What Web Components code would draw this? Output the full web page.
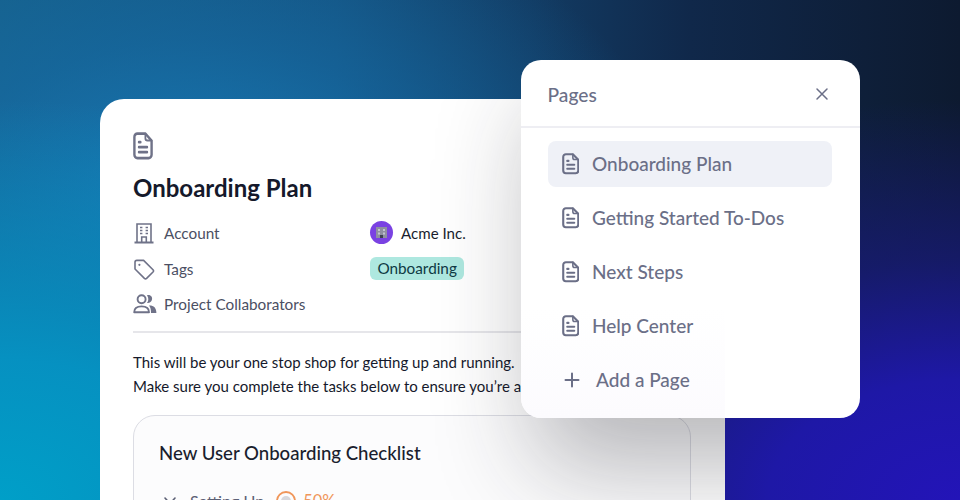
<!DOCTYPE html>
<html><head><meta charset="utf-8">
<style>
html,body{margin:0;padding:0;width:960px;height:500px;overflow:hidden}
body{font-family:Lato,"Open Sans",sans-serif}
</style></head><body>
<onboarding-scene>
  <doc-card>
    <meta-row label="Account" icon="building"><company-chip>Acme Inc.</company-chip></meta-row>
    <meta-row label="Tags" icon="tag"><tag-pill>Onboarding</tag-pill></meta-row>
    <meta-row label="Project Collaborators" icon="users"></meta-row>
  </doc-card>
  <pages-panel>
    <page-item active>Onboarding Plan</page-item>
    <page-item>Getting Started To-Dos</page-item>
    <page-item>Next Steps</page-item>
    <page-item>Help Center</page-item>
    <page-item add>Add a Page</page-item>
  </pages-panel>
</onboarding-scene>
<script>
const DOC=(w,h)=>`<svg width="${w}" height="${h}" viewBox="0 0 20 24.4" preserveAspectRatio="none" fill="none" stroke="currentColor" stroke-width="2.4" stroke-linecap="round" stroke-linejoin="round"><path d="M12.4 1.4H4.4A3 3 0 0 0 1.4 4.4V20A3 3 0 0 0 4.4 23H15.6A3 3 0 0 0 18.6 20V7.6Z"/><path d="M12.4 1.6V5.4A2 2 0 0 0 14.4 7.4H18.4" stroke-width="1.8"/><path d="M6 9H7.4M6 13.4H14M6 17.8H14"/></svg>`;
const ICONS={
building:`<svg width="22" height="22" viewBox="0 0 22 22" fill="none" stroke="currentColor" stroke-width="1.6"><path d="M4 20.5V2H18V20.5"/><path d="M1.5 20.5H20.5" stroke-width="1.8"/><path d="M8.7 20.5V15H13.3V20.5"/><path d="M7 5.5H9.4M12.6 5.5H15M7 8.5H9.4M12.6 8.5H15M7 11.5H9.4M12.6 11.5H15" stroke-width="1.7"/></svg>`,
tag:`<svg width="22" height="22" viewBox="0 0 22 22" fill="none" stroke="currentColor" stroke-width="1.6" stroke-linejoin="round"><path d="M2 4.2A1.8 1.8 0 0 1 3.8 2.4H10.6L20 11.8A1.6 1.6 0 0 1 20 14L13.6 20.4A1.6 1.6 0 0 1 11.4 20.4L2 11Z"/><circle cx="6.4" cy="6.8" r="1.1" fill="currentColor" stroke="none"/></svg>`,
users:`<svg width="24" height="22" viewBox="0 0 24 22" fill="none"><circle cx="8.6" cy="6.2" r="4" stroke="currentColor" stroke-width="1.9"/><path d="M1.2 19.2C1.2 15.4 3.6 13.4 8.6 13.4S16 15.4 16 19.2Z" stroke="currentColor" stroke-width="1.9" stroke-linejoin="round"/><path d="M14 2.2C18 1.4 19.6 4.2 19 6.6 18.5 9 16.4 10.4 14 10 15.8 7.6 15.8 4.8 14 2.2Z" fill="currentColor"/><path d="M16 12.4C20.6 12.2 23.4 14.6 23.4 20H18C18 16.6 17.6 14.4 16 12.4Z" fill="currentColor"/></svg>`};

class OnboardingScene extends HTMLElement{constructor(){super();this.attachShadow({mode:'open'}).innerHTML=`<style>
:host{display:block;position:relative;width:960px;height:500px;overflow:hidden;
background:
 radial-gradient(640px 400px at 100% 100%,#2314b8 0%,#1e18a6 30%,rgba(24,26,120,.75) 60%,rgba(16,28,70,0) 100%),
 radial-gradient(620px 400px at 0% 100%,#009fc8 0%,rgba(4,150,198,.9) 35%,rgba(10,120,180,0) 100%),
 radial-gradient(480px 300px at 20% 38%,rgba(24,122,182,.95) 0%,rgba(22,110,170,.55) 50%,rgba(20,90,140,0) 100%),
 linear-gradient(90deg,#165f88 0%,#14507c 35%,#123c64 55%,#10284a 72%,#0d1a30 100%);}
</style><slot></slot>`}}
class DocCard extends HTMLElement{constructor(){super();this.attachShadow({mode:'open'}).innerHTML=`<style>
:host{display:block;position:absolute;left:100px;top:99px;width:625px;height:460px;background:#fff;border-radius:24px 24px 0 0;overflow:hidden;box-sizing:border-box;padding:33px 34px 0 33px;color:#15192b}
.shade{position:absolute;left:421px;top:-39px;width:338px;height:358px;border-radius:20px;box-shadow:14px 48px 100px rgba(30,30,40,.32)}
.ic{color:#6f7288;height:28px;display:block}
.ic svg{display:block}
h1{margin:13px 0 0;font:700 24px/30px Lato,sans-serif;color:#15192b}
.rows{margin-top:12px;display:flex;flex-direction:column}
hr{border:0;height:2px;background:#e6e6ea;margin:9px 0 0}
p{margin:17px 0 0;font:400 15px/24px Lato,sans-serif;color:#15192b;white-space:nowrap}
.box{margin-top:17px;border:1px solid #dcdde4;border-radius:22px;height:150px;padding:24px 25px;background:#fcfcfd;box-sizing:border-box;width:558px}
h2{margin:0;font:500 18.6px/26px Lato,sans-serif;color:#1a1e2e}
.prog{display:flex;align-items:flex-start;margin-top:23px;font:400 16.1px/24px Lato,sans-serif;color:#5c6075;margin-left:4px}
.name{margin:0 12px 0 13px}
.pct{color:#f0965a;font-size:16.5px;margin-left:7px}
.prog svg{display:block;flex:none}
.chev{margin-top:7px}
.ring{margin-top:2px}
</style>
<span class="ic">${DOC(20,27.7)}</span>
<h1>Onboarding Plan</h1>
<div class="rows"><slot></slot></div>
<hr>
<p>This will be your one stop shop for getting up and running.<br>Make sure you complete the tasks below to ensure you’re a</p>
<div class="box"><h2>New User Onboarding Checklist</h2>
<div class="prog"><svg class="chev" width="14" height="10" viewBox="0 0 14 10" fill="none" stroke="#5c6075" stroke-width="1.6" stroke-linecap="round"><path d="M2 2L7 7.5L12 2"/></svg><span class="name">Setting Up</span><svg class="ring" width="20" height="20" viewBox="0 0 20 20" fill="none"><circle cx="10" cy="10" r="9" stroke="#f0965a" stroke-width="1.8"/><circle cx="10" cy="10" r="5" fill="#d8d8dc"/></svg><span class="pct">50%</span></div></div>
<div class="shade"></div>`}}
class MetaRow extends HTMLElement{connectedCallback(){if(this.shadowRoot)return;this.attachShadow({mode:'open'}).innerHTML=`<style>
:host{display:grid;grid-template-columns:237px 1fr;align-items:center;height:35.8px;font:400 15.3px/20px Lato,sans-serif;color:#4b4f63}
.l{display:flex;align-items:center;gap:7px}
.i{width:24px;display:flex;justify-content:flex-start;color:#6f7288}
svg{display:block}
</style><div class="l"><span class="i">${ICONS[this.getAttribute('icon')]}</span><span>${this.getAttribute('label')}</span></div><div><slot></slot></div>`}}
class CompanyChip extends HTMLElement{constructor(){super();this.attachShadow({mode:'open'}).innerHTML=`<style>
:host{display:inline-flex;align-items:center;gap:8px;font:400 15.1px/20px Lato,sans-serif;color:#1a1e2e}
.a{width:23px;height:23px;border-radius:50%;background:#7a42e2;display:flex;align-items:center;justify-content:center}
</style><span class="a"><svg width="13" height="13" viewBox="0 0 13 13"><rect x="1" y="1" width="11" height="11" fill="#8f90a0"/><rect x="3" y="3" width="2" height="2" fill="#c4c5d0"/><rect x="8" y="3" width="2" height="2" fill="#c4c5d0"/><rect x="3" y="6.5" width="2" height="2" fill="#c4c5d0"/><rect x="8" y="6.5" width="2" height="2" fill="#c4c5d0"/><rect x="5" y="9" width="3" height="3" fill="#3f4152"/></svg></span><span><slot></slot></span>`}}
class TagPill extends HTMLElement{constructor(){super();this.attachShadow({mode:'open'}).innerHTML=`<style>
:host{display:inline-block;background:#aee8e0;color:#0f3a44;border-radius:6px;padding:0 7.4px;font:400 15.3px/23px Lato,sans-serif}
</style><slot></slot>`}}
class PagesPanel extends HTMLElement{constructor(){super();this.attachShadow({mode:'open'}).innerHTML=`<style>
:host{display:block;position:absolute;left:520.5px;top:60px;width:339px;height:358px;border-radius:20px;box-sizing:border-box;color:#6b6f87;
background:linear-gradient(to top,#fcfbfe,#fff) left bottom/204px 110px no-repeat,#fff}
header{display:flex;align-items:center;justify-content:space-between;padding:4px 30px 0 27px;box-sizing:border-box;border-bottom:2px solid #eeeef3;height:68px;font:500 19.2px/24px Lato,sans-serif}
header svg{margin-top:-3px}
.list{padding:13px 27.5px 0;display:flex;flex-direction:column;gap:8px}
</style><header><span>Pages</span><svg width="16" height="16" viewBox="0 0 16 16" fill="none" stroke="#6b6f87" stroke-width="1.5" stroke-linecap="round"><path d="M3 3L13 13M13 3L3 13"/></svg></header><div class="list"><slot></slot></div>`}}
class PageItem extends HTMLElement{connectedCallback(){if(this.shadowRoot)return;const add=this.hasAttribute('add');this.attachShadow({mode:'open'}).innerHTML=`<style>
:host{display:flex;align-items:center;height:46px;border-radius:8px;padding-left:${add?'16px':'13.5px'};gap:${add?'16px':'13px'};font:500 19px/24px Lato,sans-serif;color:#6b6f87}
:host([active]){background:#eff1f7}
svg{display:block;flex:none}
</style>${add?`<svg width="16" height="16" viewBox="0 0 16 16" fill="none" stroke="currentColor" stroke-width="2" stroke-linecap="round"><path d="M8 1.5V14.5M1.5 8H14.5"/></svg>`:DOC(17.5,21.5)}<span><slot></slot></span>`}}
customElements.define('onboarding-scene',OnboardingScene);
customElements.define('doc-card',DocCard);
customElements.define('meta-row',MetaRow);
customElements.define('company-chip',CompanyChip);
customElements.define('tag-pill',TagPill);
customElements.define('pages-panel',PagesPanel);
customElements.define('page-item',PageItem);
</script>
</body></html>
